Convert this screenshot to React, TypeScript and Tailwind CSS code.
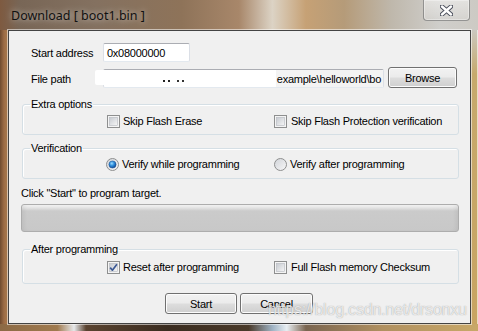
import React from "react";

const ui = "font-['Liberation_Sans',Arial,sans-serif] text-[11px] leading-[14px] tracking-[-0.25px] text-black";

const CheckBox = ({ checked = false }: { checked?: boolean }) => (
  <svg width="13" height="13" viewBox="0 0 13 13" className="shrink-0">
    <defs>
      <linearGradient id="cbInner" x1="0" y1="0" x2="1" y2="1">
        <stop offset="0" stopColor="#c6cad0" />
        <stop offset="1" stopColor="#f6f6f6" />
      </linearGradient>
    </defs>
    <rect x="0.5" y="0.5" width="12" height="12" fill="#f4f4f4" stroke="#8e8f8f" />
    <rect x="2.5" y="2.5" width="8" height="8" fill="url(#cbInner)" stroke="#b4b8be" strokeWidth="0.6" />
    {checked && (
      <path d="M3.2 6.6 L5.4 9.2 L9.9 3.3" fill="none" stroke="#3b5894" strokeWidth="1.7" strokeLinejoin="round" />
    )}
  </svg>
);

const Radio = ({ checked = false }: { checked?: boolean }) => (
  <svg width="13" height="13" viewBox="0 0 13 13" className="shrink-0">
    <defs>
      <linearGradient id="rdOuter" x1="0" y1="0" x2="1" y2="1">
        <stop offset="0" stopColor="#d0d3d8" />
        <stop offset="1" stopColor="#f8f8f8" />
      </linearGradient>
      <radialGradient id="rdDot" cx="0.4" cy="0.35" r="0.7">
        <stop offset="0" stopColor="#9fdcff" />
        <stop offset="0.45" stopColor="#2f8fdc" />
        <stop offset="1" stopColor="#0b3f8c" />
      </radialGradient>
    </defs>
    <circle cx="6.5" cy="6.5" r="6" fill="url(#rdOuter)" stroke="#8e8f8f" />
    {checked && <circle cx="6.5" cy="6.5" r="3.6" fill="url(#rdDot)" stroke="#1b4f8f" strokeWidth="0.5" />}
  </svg>
);

const Win7Button = ({ label, w }: { label: string; w: string }) => (
  <button
    className={`${w} h-[21px] rounded-[3px] border border-[#707070] bg-[linear-gradient(180deg,#f2f2f2_0%,#ebebeb_48%,#dddddd_52%,#cfcfcf_100%)] shadow-[inset_0_0_0_1px_#fcfcfc] ${ui} flex items-center justify-center`}
  >
    {label}
  </button>
);

const Group = ({ title, pt, pb, children }: { title: string; pt: string; pb: string; children: React.ReactNode }) => (
  <fieldset className={`ml-[13px] w-[437px] rounded-[3px] border border-[#d5dfe5] shadow-[inset_1px_1px_0_#ffffff] ${pt} ${pb}`}>
    <legend className={`ml-[7px] px-[1px] ${ui}`}>{title}</legend>
    {children}
  </fieldset>
);

const CloseGlyph = () => (
  <svg width="13" height="11" viewBox="0 0 13 11">
    <path d="M2 1.5 L11 9.5 M11 1.5 L2 9.5" stroke="#4b4f5c" strokeWidth="4.4" strokeLinecap="round" />
    <path d="M2 1.5 L11 9.5 M11 1.5 L2 9.5" stroke="#ffffff" strokeWidth="2.4" strokeLinecap="round" />
  </svg>
);

export default function App() {
  return (
    <div className="relative w-[478px] h-[331px] overflow-hidden flex flex-col bg-[linear-gradient(90deg,#7e5a40_0%,#786656_4%,#847160_20%,#8e7359_38%,#a8876a_50%,#dcd3c5_57%,#c6a175_64%,#b59b79_72%,#bfb8ac_82%,#cfcecb_92%,#cdcac4_100%)]">
      {/* title bar */}
      <div className="h-[30px] flex shrink-0">
        <div className="pl-[11px] pt-[8px] font-['Noto_Sans',sans-serif] text-[12.5px] leading-[16px] text-[#111] [text-shadow:0_0_6px_rgba(255,255,255,0.7)]">
          Download [ boot1.bin ]
        </div>
        <div className="ml-auto mr-[8px] w-[47px] h-[21px] rounded-b-[4px] border border-t-0 border-[#5f5f5f]/60 bg-[linear-gradient(180deg,rgba(255,255,255,0.45),rgba(255,255,255,0.15))] shadow-[inset_0_0_0_1px_rgba(255,255,255,0.35)] flex items-center justify-center pt-[1px]">
          <CloseGlyph />
        </div>
      </div>

      <div className="flex h-[294px] shrink-0">
        <div className="w-[8px] bg-[linear-gradient(90deg,#6e4a2e,#9c6c46_50%,#a97a4c)]" />
        <div className={`relative w-[463px] border border-[#434343] bg-[#f0f0f0] shadow-[0_0_0_1px_rgba(255,255,255,0.55)] ${ui}`}>
          {/* start address */}
          <div className="mt-[12px] flex items-center pl-[22px] h-[19px]">
            <div className="w-[72px]">Start address</div>
            <div className="w-[87px] h-[19px] bg-white border border-[#abadb3] border-l-[#dbdfe6] border-r-[#dbdfe6] border-b-[#e3e9ef] rounded-[2px] pl-[3px] flex items-center">
              0x08000000
            </div>
          </div>

          {/* file path */}
          <div className="mt-[5px] flex pl-[22px] h-[21px]">
            <div className="w-[72px] mt-[5px]">File path</div>
            <div className="mt-[2px] w-[281px] h-[19px] bg-white border border-[#abadb3] border-l-[#dbdfe6] border-r-[#dbdfe6] border-b-[#e3e9ef] rounded-[2px] flex justify-end overflow-hidden">
              <span className="bg-[#f3f3f3] pl-[1px] pr-[2px] flex items-center whitespace-nowrap">example\helloworld\bo</span>
            </div>
            <div className="ml-[4px]">
              <Win7Button label="Browse" w="w-[69px]" />
            </div>
          </div>

          {/* redacted path */}
          <div className="absolute left-[86px] top-[39px] w-[178px] h-[15px] bg-white rounded-[2px]">
            <span className="absolute left-[68px] top-[10px] w-[2px] h-[2px] bg-[#222]" />
            <span className="absolute left-[73px] top-[10px] w-[2px] h-[2px] bg-[#222]" />
            <span className="absolute left-[82px] top-[10px] w-[2px] h-[2px] bg-[#333]" />
            <span className="absolute left-[87px] top-[10px] w-[2px] h-[2px] bg-[#333]" />
          </div>

          <div className="mt-[9px]">
            <Group title="Extra options" pt="pt-[3px]" pb="pb-[6px]">
              <div className="flex pl-[84px] h-[14px] items-center">
                <div className="w-[167px] flex items-center gap-[3px]">
                  <CheckBox />
                  <span>Skip Flash Erase</span>
                </div>
                <div className="flex items-center gap-[4px]">
                  <CheckBox />
                  <span className="whitespace-nowrap">Skip Flash Protection verification</span>
                </div>
              </div>
            </Group>
          </div>

          <div className="mt-[6px]">
            <Group title="Verification" pt="pt-[2px]" pb="pb-[7px]">
              <div className="flex pl-[83px] h-[14px] items-center">
                <div className="w-[168px] flex items-center gap-[3px]">
                  <Radio checked />
                  <span>Verify while programming</span>
                </div>
                <div className="flex items-center gap-[3px]">
                  <Radio />
                  <span>Verify after programming</span>
                </div>
              </div>
            </Group>
          </div>

          <div className="mt-[7px] pl-[12px]">Click "Start" to program target.</div>

          <div className="mt-[4px] ml-[12px] w-[438px] h-[28px] rounded-[3px] border border-[#adadad] bg-[linear-gradient(180deg,#f4f4f4_0px,#e2e2e2_3px,#cbcbcb_6px,#c8c8c8_100%)] shadow-[inset_4px_0_4px_-2px_rgba(0,0,0,0.06),inset_-4px_0_4px_-2px_rgba(0,0,0,0.06)]" />

          <div className="mt-[10px]">
            <Group title="After programming" pt="pt-[4px]" pb="pb-[9px]">
              <div className="flex pl-[84px] h-[14px] items-center">
                <div className="w-[167px] flex items-center gap-[3px]">
                  <CheckBox checked />
                  <span>Reset after programming</span>
                </div>
                <div className="flex items-center gap-[4px]">
                  <CheckBox />
                  <span>Full Flash memory Checksum</span>
                </div>
              </div>
            </Group>
          </div>

          <div className="mt-[9px] flex pl-[156px] gap-[3px]">
            <Win7Button label="Start" w="w-[72px]" />
            <Win7Button label="Cancel" w="w-[73px]" />
          </div>
        </div>
        <div className="flex-1 bg-[linear-gradient(180deg,#cbc8c0_0%,#c6a96c_15%,#c8a462_100%)] shadow-[inset_-1px_0_0_rgba(255,255,255,0.6)]" />
      </div>

      <div className="flex-1 bg-[linear-gradient(90deg,#8c6a45_0%,#a07a4e_12%,#e6e8ea_15.5%,#5a4330_18%,#3a2c20_35%,#4a3a2a_52%,#9fb3c4_57%,#e8eef2_60%,#7a6550_64%,#b09060_80%,#c8a868_100%)]" />

      {/* watermark */}
      <div className="absolute left-[268px] top-[300px] font-['Liberation_Sans',Arial,sans-serif] text-[16px] leading-[19px] tracking-[-0.2px] text-white/75 [text-shadow:0_0_1px_rgba(110,110,110,0.7)] whitespace-nowrap pointer-events-none">
        https://blog.csdn.net/drsonxu
      </div>
    </div>
  );
}
